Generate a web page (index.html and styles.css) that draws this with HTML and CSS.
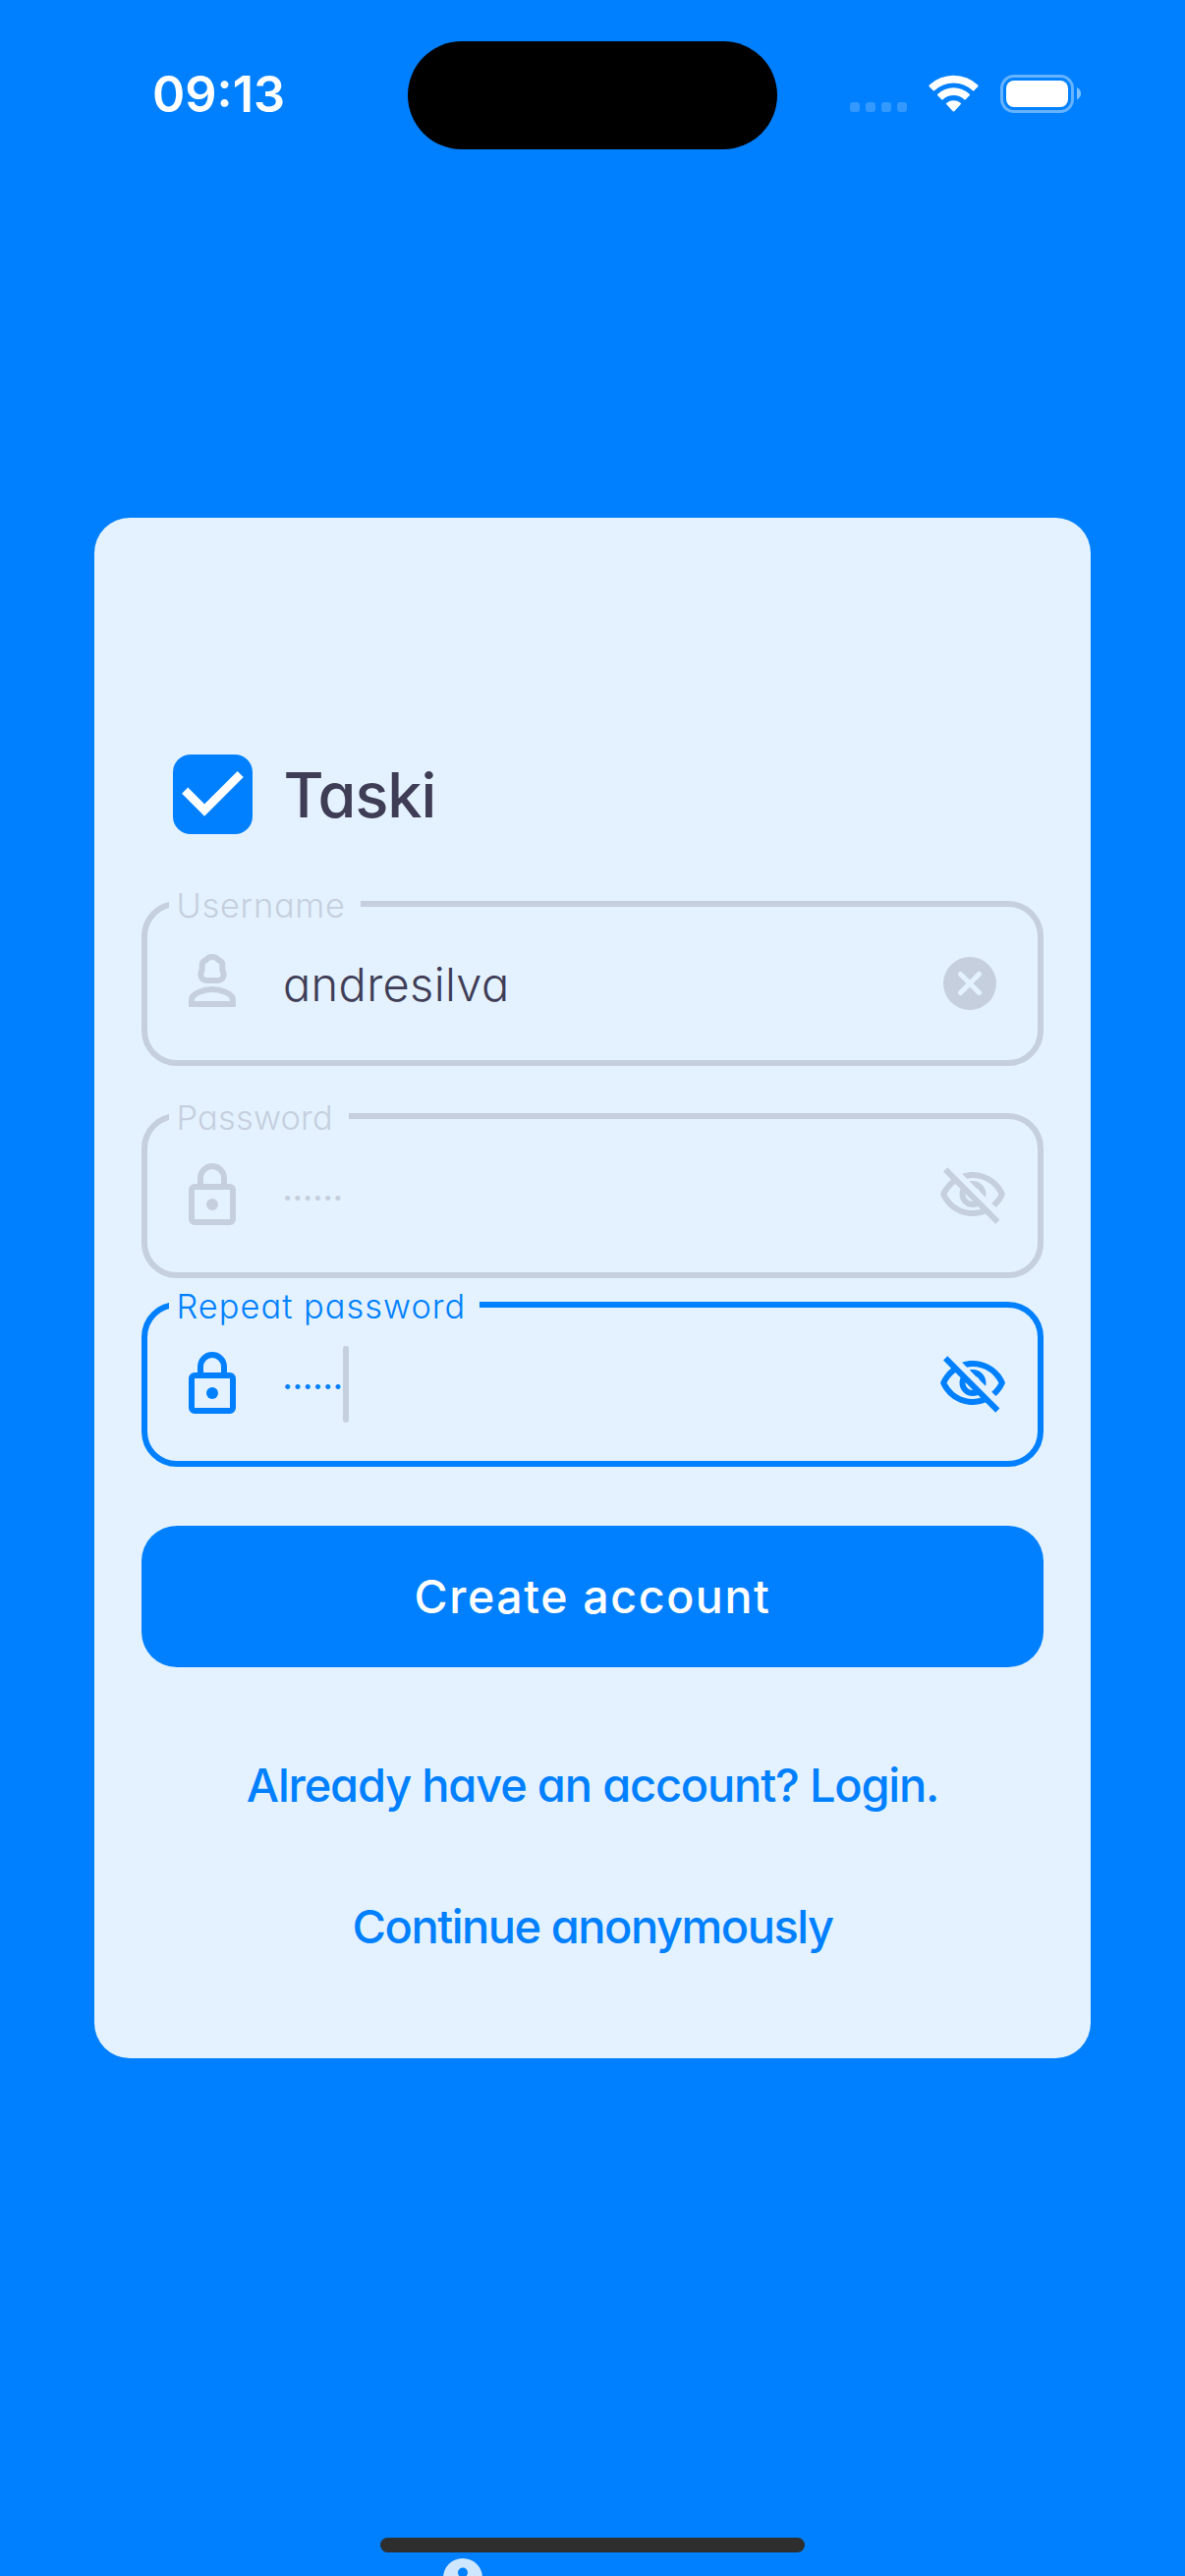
FILE: index.html
```html
<!DOCTYPE html>
<html lang="en">
<head>
<meta charset="utf-8">
<title>Taski</title>
<link rel="stylesheet" href="styles.css">
</head>
<body>
<div class="screen">
  <header class="status">
    <div class="time">09:13</div>
    <div class="island"></div>
    <svg class="indicators" width="240" height="42" viewBox="864 75 240 42">
      <g fill="#fff" fill-opacity=".2">
        <rect x="865" y="104" width="10" height="10" rx="3"/>
        <rect x="881" y="104" width="10" height="10" rx="3"/>
        <rect x="897" y="104" width="10" height="10" rx="3"/>
        <rect x="913" y="104" width="10" height="10" rx="3"/>
      </g>
      <g fill="#fff">
        <path d="M945.8 88.2Q945 87.3 945.8 86.5A36 36 0 0 1 995.2 86.5Q996 87.3 995.2 88.2L991.2 92.2Q990.6 92.8 990 92.2A28.5 28.5 0 0 0 951 92.2Q950.4 92.8 949.8 92.2Z"/>
        <path d="M954.3 97.3Q953.5 96.5 954.3 95.7A23.5 23.5 0 0 1 986.7 95.7Q987.5 96.5 986.7 97.3L982.7 101.3Q982 102 981.3 101.3A16 16 0 0 0 959.7 101.3Q959 102 958.3 101.3Z"/>
        <path d="M963.3 106.3Q962.5 105.5 963.4 104.8A11.5 11.5 0 0 1 977.6 104.8Q978.5 105.5 977.7 106.3L971.2 113.2Q970.5 114 969.8 113.2Z"/>
        <rect x="1024" y="82" width="63" height="27" rx="8"/>
      </g>
      <rect x="1019.5" y="77.5" width="72" height="36" rx="12.5" fill="none" stroke="#fff" stroke-opacity=".4" stroke-width="3"/>
      <path d="M1096 89Q1100 91 1100 95.2T1096 101.3Z" fill="#fff" fill-opacity=".5"/>
    </svg>
  </header>

  <main class="card">
    <div class="brand">
      <svg width="81" height="81" viewBox="0 0 81 81">
        <rect width="81" height="81" rx="18" fill="#0080ff"/>
        <path d="M12.2 36.6L32.1 56.5L68.7 20" fill="none" stroke="#fff" stroke-width="8.7"/>
      </svg>
      <h1 class="brand-name">Taski</h1>
    </div>

    <form class="form">
      <div class="field">
        <span class="label label-user">Username</span>
        <svg class="icon" viewBox="150 225 216 216" fill="none" stroke="currentColor" stroke-width="18">
          <path d="M240 324H276C286 324 293 316 293 306C293 300 291 296 289 292V277C289 269 284 264 278 262C272 255 266 252 258 252S244 255 238 262C232 264 227 269 227 277V292C225 296 223 300 223 306C223 316 230 324 240 324Z"/>
          <path d="M195 396V384C195 360 240 351 258 351S321 360 321 384V396Z"/>
        </svg>
        <span class="value value-text">andresilva</span>
        <svg class="icon icon-clear" viewBox="0 0 72 72">
          <circle cx="36" cy="36" r="27" fill="currentColor"/>
          <path d="M26.5 26.5L45.5 45.5M45.5 26.5L26.5 45.5" stroke="#e4f2ff" stroke-width="5.2" stroke-linecap="round"/>
        </svg>
      </div>

      <div class="field">
        <span class="label label-pass">Password</span>
        <svg class="icon" viewBox="0 0 72 72" fill="none" stroke="currentColor" stroke-width="6">
          <rect x="15" y="27" width="42" height="36" rx="3"/>
          <path d="M24 25V18A12 12 0 0 1 48 18V25"/>
          <circle cx="36" cy="45" r="6" fill="currentColor" stroke="none"/>
        </svg>
        <span class="value"><span class="dots">······</span></span>
        <svg class="icon" viewBox="0 0 24 24" fill="currentColor"><path d="M12 6c3.79 0 7.17 2.13 8.82 5.5-.59 1.22-1.42 2.27-2.41 3.12l1.41 1.41c1.39-1.23 2.49-2.77 3.18-4.53C21.27 7.11 17 4 12 4c-1.27 0-2.49.2-3.64.57l1.65 1.65C10.66 6.09 11.32 6 12 6zm-1.07 1.14L13 9.21c.57.25 1.03.71 1.28 1.28l2.07 2.07c.08-.34.14-.7.14-1.07C16.5 9.01 14.48 7 12 7c-.37 0-.72.05-1.07.14zM2.01 3.87l2.68 2.68C3.06 7.83 1.77 9.53 1 11.5 2.73 15.89 7 19 12 19c1.52 0 2.98-.29 4.32-.82l3.42 3.42 1.41-1.41L3.42 2.45 2.01 3.87zm7.5 7.5l2.61 2.61c-.04.01-.08.02-.12.02-1.38 0-2.5-1.12-2.5-2.5 0-.05.01-.08.01-.13zm-3.4-3.4l1.75 1.75c-.23.55-.36 1.15-.36 1.78 0 2.48 2.02 4.5 4.5 4.5.63 0 1.23-.13 1.77-.36l.98.98c-.88.24-1.8.38-2.75.38-3.79 0-7.17-2.13-8.82-5.5.7-1.43 1.72-2.61 2.93-3.53z"/></svg>
      </div>

      <div class="field field-active">
        <span class="label label-repeat">Repeat password</span>
        <svg class="icon" viewBox="0 0 72 72" fill="none" stroke="currentColor" stroke-width="6">
          <rect x="15" y="27" width="42" height="36" rx="3"/>
          <path d="M24 25V18A12 12 0 0 1 48 18V25"/>
          <circle cx="36" cy="45" r="6" fill="currentColor" stroke="none"/>
        </svg>
        <span class="value"><span class="dots">······</span><i class="caret"></i></span>
        <svg class="icon" viewBox="0 0 24 24" fill="currentColor"><path d="M12 6c3.79 0 7.17 2.13 8.82 5.5-.59 1.22-1.42 2.27-2.41 3.12l1.41 1.41c1.39-1.23 2.49-2.77 3.18-4.53C21.27 7.11 17 4 12 4c-1.27 0-2.49.2-3.64.57l1.65 1.65C10.66 6.09 11.32 6 12 6zm-1.07 1.14L13 9.21c.57.25 1.03.71 1.28 1.28l2.07 2.07c.08-.34.14-.7.14-1.07C16.5 9.01 14.48 7 12 7c-.37 0-.72.05-1.07.14zM2.01 3.87l2.68 2.68C3.06 7.83 1.77 9.53 1 11.5 2.73 15.89 7 19 12 19c1.52 0 2.98-.29 4.32-.82l3.42 3.42 1.41-1.41L3.42 2.45 2.01 3.87zm7.5 7.5l2.61 2.61c-.04.01-.08.02-.12.02-1.38 0-2.5-1.12-2.5-2.5 0-.05.01-.08.01-.13zm-3.4-3.4l1.75 1.75c-.23.55-.36 1.15-.36 1.78 0 2.48 2.02 4.5 4.5 4.5.63 0 1.23-.13 1.77-.36l.98.98c-.88.24-1.8.38-2.75.38-3.79 0-7.17-2.13-8.82-5.5.7-1.43 1.72-2.61 2.93-3.53z"/></svg>
      </div>

      <button class="submit" type="button">Create account</button>
    </form>

    <nav class="links">
      <a class="link link-login">Already have an account? Login.</a>
      <a class="link link-anon">Continue anonymously</a>
    </nav>
  </main>

  <footer class="bottom">
    <div class="home"></div>
    <svg class="peek" width="40" height="18" viewBox="0 0 40 18">
      <path fill="#cfe6ff" fill-rule="evenodd" d="M20 0A20 20 0 1 1 20 40A20 20 0 1 1 20 0ZM20 9.5A5 5 0 1 0 20 19.5A5 5 0 1 0 20 9.5Z"/>
    </svg>
  </footer>
</div>
</body>
</html>
```
FILE: styles.css
```css
* { box-sizing: border-box; }

body {
  margin: 0;
  background: #0080ff;
  font-family: Inter, "Liberation Sans", sans-serif;
  font-feature-settings: "cv11", "ss03";
}

.screen {
  display: flex;
  flex-direction: column;
  width: 1206px;
  height: 2622px;
  overflow: hidden;
  background: #0080ff;
}

.status {
  display: grid;
  grid-template-columns: 415px 376px 1fr;
  align-items: center;
  height: 110px;
  margin-top: 42px;
}

.time {
  padding: 0 0 3px 155px;
  color: #fff;
  font-size: 50.5px;
  font-weight: 600;
  line-height: 60px;
}

.island {
  height: 110px;
  border-radius: 55px;
  background: #000;
}

.indicators { margin: 0 0 2px 73px; }

.card {
  display: flex;
  flex-direction: column;
  height: 1568px;
  margin: 375px 96px 0;
  padding: 241px 48px 0;
  border-radius: 36px;
  background: #e4f2ff;
}

.brand {
  display: flex;
  align-items: center;
  gap: 32px;
  height: 81px;
  padding-left: 31.5px;
}

.brand-name {
  margin: 0;
  color: #3f3d56;
  font-size: 63px;
  font-weight: 500;
  letter-spacing: -1.1px;
  line-height: 80px;
}

.form {
  display: flex;
  flex-direction: column;
  margin-top: 68px;
}

.field {
  position: relative;
  display: flex;
  align-items: center;
  height: 168px;
  margin-bottom: 48px;
  padding: 0 30px;
  border: 6px solid #c5cfdd;
  border-radius: 36px;
  color: #c5cfdd;
}

.field:nth-of-type(2) { margin-bottom: 24px; }

.field-active {
  margin-bottom: 60px;
  border-color: #0080ff;
  color: #0080ff;
}

/* Floating label, interrupts the top border */
.label {
  position: absolute;
  top: -22px;
  left: 21.5px;
  height: 42px;
  padding-left: 8px;
  background: #e4f2ff;
  font-size: 34.4px;
  font-weight: 300;
  line-height: 42px;
  white-space: nowrap;
}

.label-user { width: 195.5px; letter-spacing: .7px; }
.label-pass { width: 183.5px; letter-spacing: .2px; }
.label-repeat { width: 316.5px; letter-spacing: 1px; }

.icon {
  flex: none;
  width: 72px;
  height: 72px;
}

.icon-clear { margin-right: 3px; }

.value {
  display: flex;
  flex: 1;
  align-items: center;
  height: 78px;
  padding-left: 36px;
  font-size: 47px;
  font-weight: 300;
}

.value-text {
  color: #3f3d56;
  letter-spacing: .3px;
}

.dots {
  width: 63px;
  margin-left: -2px;
  padding-top: 3px;
  font-weight: 350;
  letter-spacing: -3px;
}

.caret {
  width: 6px;
  height: 78px;
  border-radius: 3px;
  background: #c5cfdd;
}

.submit {
  height: 144px;
  padding: 0;
  border: 0;
  border-radius: 36px;
  background: #0080ff;
  color: #fff;
  font: 500 46.5px Inter, "Liberation Sans", sans-serif;
  letter-spacing: 1.6px;
}

.links {
  display: flex;
  flex-direction: column;
  margin-top: 48px;
  text-align: center;
}

.link {
  height: 144px;
  color: #0080ff;
  font-size: 47px;
  font-weight: 500;
  line-height: 144px;
}

.link-login { letter-spacing: -1.2px; }
.link-anon { letter-spacing: -1.5px; }

.bottom {
  display: flex;
  flex-direction: column;
  gap: 6px;
  margin-top: 488px;
}

.home {
  width: 432px;
  height: 15px;
  margin-left: 387px;
  border-radius: 8px;
  background: #2e2e2e;
}

.peek { margin-left: 451px; }
```
